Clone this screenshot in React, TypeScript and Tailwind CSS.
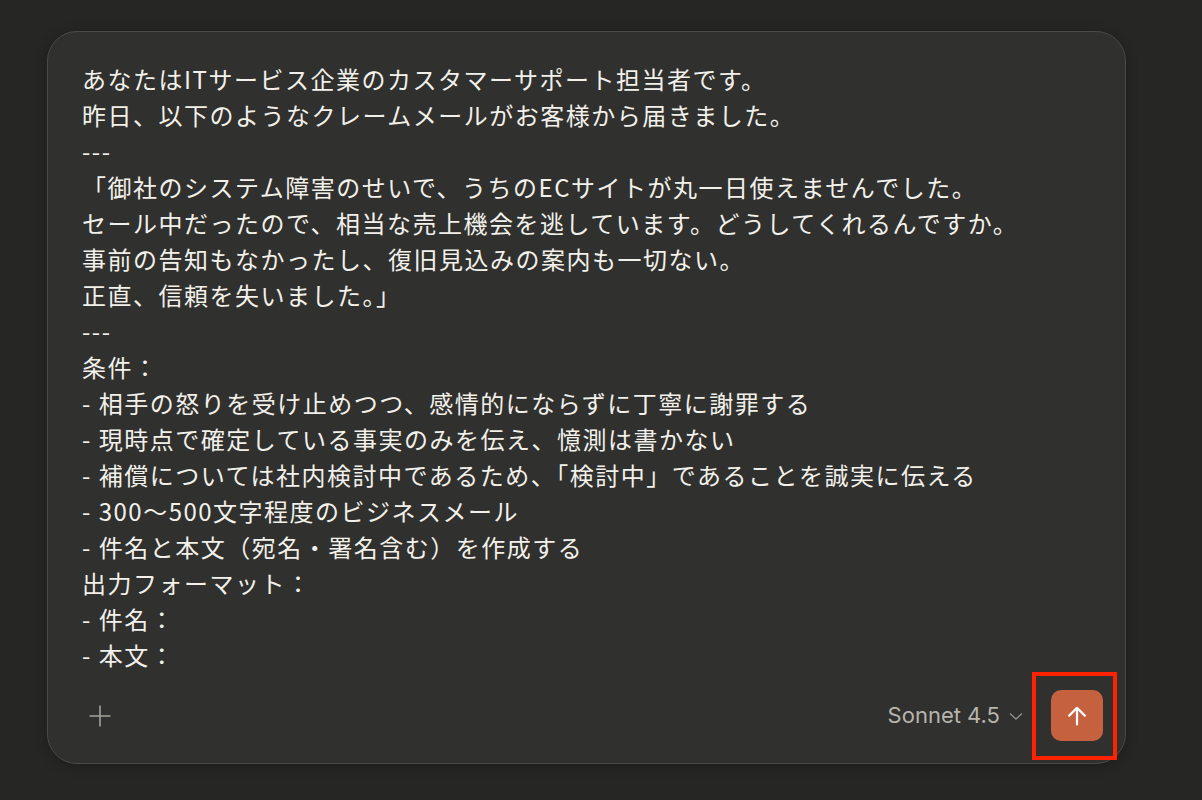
import React from "react";

const lines = [
  "あなたはITサービス企業のカスタマーサポート担当者です。",
  "昨日、以下のようなクレームメールがお客様から届きました。",
  "---",
  "「御社のシステム障害のせいで、うちのECサイトが丸一日使えませんでした。",
  "セール中だったので、相当な売上機会を逃しています。どうしてくれるんですか。",
  "事前の告知もなかったし、復旧見込みの案内も一切ない。",
  "正直、信頼を失いました。」",
  "---",
  "条件：",
  "- 相手の怒りを受け止めつつ、感情的にならずに丁寧に謝罪する",
  "- 現時点で確定している事実のみを伝え、憶測は書かない",
  "- 補償については社内検討中であるため、「検討中」であることを誠実に伝える",
  "- 300〜500文字程度のビジネスメール",
  "- 件名と本文（宛名・署名含む）を作成する",
  "出力フォーマット：",
  "- 件名：",
  "- 本文：",
];

export default function App() {
  return (
    <div
      className="w-[1202px] h-[800px] bg-[#262624] pt-[31px] pl-[47px]"
      style={{ fontFamily: '"Noto Sans CJK JP", "Noto Sans", sans-serif' }}
    >
      <div className="w-[1079px] h-[733px] rounded-[30px] border border-[#4a4a46] bg-[#30302e] flex flex-col shadow-[0_2px_12px_rgba(0,0,0,0.25)]">
        <div className="pl-[34px] pr-[20px] pt-[29px] text-[24px] leading-[36px] text-[#f2f0ea] tracking-[1.5px] flex-1">
          {lines.map((l, i) => (
            <div key={i} className="whitespace-pre">
              {l}
            </div>
          ))}
        </div>
        <div className="flex items-center justify-between pl-[40px] pr-[22px] pb-[22px]">
          <svg width="24" height="24" viewBox="0 0 24 24" fill="none" stroke="#a3a19b" strokeWidth="1.6" strokeLinecap="butt">
            <path d="M12 1.5V22.5M1.5 12H22.5" />
          </svg>
          <div className="flex items-center">
            <span
              className="text-[22px] text-[#b7b5ae] mr-[9px]"
              style={{ fontFamily: '"Inter", "Noto Sans", sans-serif' }}
            >
              Sonnet 4.5
            </span>
            <svg width="14" height="10" viewBox="0 0 14 10" fill="none" stroke="#8f8d87" strokeWidth="1.3" className="mr-[28px]">
              <path d="M1 2.5L7 8L13 2.5" />
            </svg>
            <div className="relative">
              <div className="w-[52px] h-[51px] rounded-[10px] bg-[#c6613f] flex items-center justify-center">
                <svg width="20" height="20" viewBox="0 0 20 20" fill="none" stroke="#ffffff" strokeWidth="2.2" strokeLinecap="round" strokeLinejoin="round">
                  <path d="M10 18.5V1.8M2.2 9.6L10 1.8L17.8 9.6" />
                </svg>
              </div>
              <div className="absolute left-[-19px] top-[-18px] w-[85px] h-[88px] border-[4px] border-[#ff2200]" />
            </div>
          </div>
        </div>
      </div>
    </div>
  );
}
